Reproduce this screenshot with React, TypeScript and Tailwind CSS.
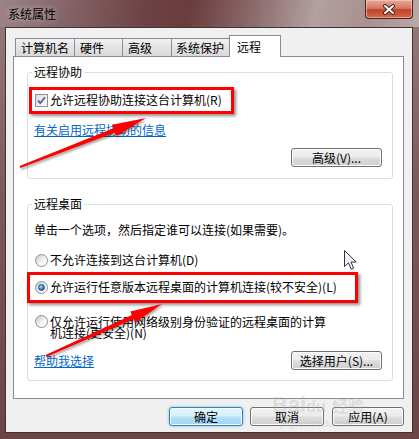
import clsx from "clsx";

type Pt = [number, number];

// red annotation arrow: thin tail, fat shaft, long head
function arrowPoints(tail: Pt, tip: Pt, headLen: number, headW: number, w0: number, w1: number) {
  const dx = tip[0] - tail[0];
  const dy = tip[1] - tail[1];
  const len = Math.hypot(dx, dy);
  const ux = dx / len;
  const uy = dy / len;
  const nx = -uy;
  const ny = ux;
  const bx = tip[0] - ux * headLen;
  const by = tip[1] - uy * headLen;
  const p = (x: number, y: number) => `${x.toFixed(1)},${y.toFixed(1)}`;
  return [
    p(tail[0] + nx * w0, tail[1] + ny * w0),
    p(bx + nx * w1, by + ny * w1),
    p(bx + nx * headW, by + ny * headW),
    p(tip[0], tip[1]),
    p(bx - nx * headW, by - ny * headW),
    p(bx - nx * w1, by - ny * w1),
    p(tail[0] - nx * w0, tail[1] - ny * w0),
  ].join(" ");
}

function Btn({ label, className, primary = false }: { label: string; className?: string; primary?: boolean }) {
  return (
    <button
      type="button"
      className={clsx(
        "flex h-[19px] items-center justify-center rounded-[3px] border text-[12px] leading-[14px] text-black",
        primary
          ? "border-[#3c7fb1] bg-[linear-gradient(180deg,#e5f4fc_0%,#d4eefb_48%,#b6e2f8_52%,#9fd5f3_100%)] shadow-[inset_0_0_0_1px_#f4fbff,0_0_3px_#5fc3f0]"
          : "border-[#707070] bg-[linear-gradient(180deg,#f2f2f2_0%,#ebebeb_48%,#dddddd_52%,#cfcfcf_100%)] shadow-[inset_0_0_0_1px_#fcfcfc]",
        className,
      )}
    >
      {label}
    </button>
  );
}

function Checkbox() {
  return (
    <div className="flex h-[13px] w-[13px] shrink-0 items-center justify-center border border-[#8e8f8f] bg-[linear-gradient(135deg,#dcdcdc,#ffffff)]">
      <svg width="11" height="11" viewBox="0 0 11 11">
        <path d="M2 5.5 L4.3 8.2 L9 2.2" fill="none" stroke="#4a5f97" strokeWidth="1.8" />
      </svg>
    </div>
  );
}

function Radio({ checked = false }: { checked?: boolean }) {
  return (
    <div className="flex h-[13px] w-[13px] shrink-0 items-center justify-center rounded-full border border-[#8e8f8f] bg-[linear-gradient(135deg,#c9c9c9,#f6f6f6_60%,#ffffff)]">
      {checked && (
        <div className="h-[7px] w-[7px] rounded-full border border-[#1b4f8a] bg-[radial-gradient(circle_at_35%_35%,#b8e3fb,#2f83c9_55%,#0d3f7d)]" />
      )}
    </div>
  );
}

function Group({ title, className, children }: { title: string; className?: string; children: React.ReactNode }) {
  return (
    <div className={clsx("relative ml-[13px] flex w-[366px] flex-col rounded-[3px] border border-[#d5dfe5]", className)}>
      <span className="absolute -top-[8px] left-[4px] bg-white px-[2px] text-[12px] leading-[14px]">{title}</span>
      {children}
    </div>
  );
}

const tabs = [
  { label: "计算机名", w: "w-[60px] pl-[5px]" },
  { label: "硬件", w: "w-[49px] pl-[5px]" },
  { label: "高级", w: "w-[50px] pl-[5px]" },
  { label: "系统保护", w: "w-[59px] pl-[4px]" },
];

export default function App() {
  return (
    <div className="relative flex h-[439px] w-[419px] flex-col overflow-hidden bg-[linear-gradient(180deg,#967c7f_0%,#7b5859_45%,#6b4547_100%)] font-['Noto_Sans_CJK_SC','Noto_Sans',sans-serif] text-black">
      {/* Title bar */}
      <div className="flex h-[27px] shrink-0 items-start bg-[linear-gradient(100deg,#9b8489_0%,#85666a_15%,#6d4244_35%,#6a3c3d_45%,#8a6a6b_60%,#b3a0a1_75%,#a8908f_88%,#b9a9a9_100%)]">
        <span className="ml-[8px] mt-[7px] text-[12px] leading-[14px] [text-shadow:0_0_6px_rgba(255,255,255,0.55)]">系统属性</span>
        <div className="ml-auto mr-[6px] flex h-[19px] w-[48px] items-center justify-center rounded-b-[4px] border border-t-0 border-[#4a2020] bg-[linear-gradient(180deg,#e7a797_0%,#d67a64_45%,#c2412a_55%,#d56a4c_100%)] shadow-[inset_0_0_0_1px_rgba(255,220,210,0.5)]">
          <svg width="14" height="11" viewBox="0 0 14 11">
            <path d="M3 2 L11 9 M11 2 L3 9" stroke="#4b2222" strokeWidth="4" strokeLinecap="round" />
            <path d="M3 2 L11 9 M11 2 L3 9" stroke="#ffffff" strokeWidth="2" strokeLinecap="round" />
          </svg>
        </div>
      </div>

      {/* Client area */}
      <div className="mb-[6px] ml-[5px] mr-[6px] flex flex-1 flex-col border border-[#3f3232] bg-[#f0f0f0] pl-[7px] pr-[8px] pt-[7px]">
        {/* Tabs */}
        <div className="flex h-[21px] items-end pl-[2px] text-[12px] leading-[14px]">
          {tabs.map((t, i) => (
            <div
              key={t.label}
              className={clsx(
                "flex h-[18px] items-center border border-b-0 border-[#898c95] bg-[linear-gradient(180deg,#f2f2f2,#e3e3e3_50%,#d9d9d9)]",
                i > 0 && "-ml-px",
                t.w,
              )}
            >
              {t.label}
            </div>
          ))}
          <div className="relative z-10 -mb-px -ml-px flex h-[22px] w-[52px] items-center border border-b-0 border-[#898c95] bg-white pl-[7px]">
            远程
          </div>
        </div>

        {/* Tab page */}
        <div className="flex h-[343px] w-[391px] flex-col border border-[#898c95] bg-white text-[12px] leading-[14px]">
          <Group title="远程协助" className="mt-[15px] h-[107px]">
            <div className="ml-[7px] mt-[20px] flex h-[14px] items-center gap-[2px]">
              <Checkbox />
              <span>允许远程协助连接这台计算机(R)</span>
            </div>
            <span className="ml-[6px] mt-[16px] self-start text-[#0066cc] underline">有关启用远程协助的信息</span>
            <Btn label="高级(V)..." className="mr-[10px] mt-[11px] w-[91px] self-end" />
          </Group>

          <Group title="远程桌面" className="mt-[25px] h-[177px]">
            <span className="ml-[6px] mt-[18px]">单击一个选项，然后指定谁可以连接(如果需要)。</span>
            <div className="ml-[7px] mt-[16px] flex h-[14px] items-center gap-[2px]">
              <Radio />
              <span>不允许连接到这台计算机(D)</span>
            </div>
            <div className="ml-[7px] mt-[13px] flex h-[14px] items-center gap-[2px]">
              <Radio checked />
              <span>允许运行任意版本远程桌面的计算机连接(较不安全)(L)</span>
            </div>
            <div className="ml-[7px] mt-[22px] flex items-start gap-[2px]">
              <div className="mt-[-1px]">
                <Radio />
              </div>
              <span className="w-[280px] leading-[11px]">
                仅允许运行使用网络级别身份验证的远程桌面的计算机连接(更安全)(N)
              </span>
            </div>
            <div className="mt-[13px] flex items-center justify-between">
              <span className="ml-[6px] text-[#0066cc] underline">帮助我选择</span>
              <Btn label="选择用户(S)..." className="mr-[10px] w-[91px]" />
            </div>
          </Group>
        </div>

        {/* Dialog buttons */}
        <div className="mt-[8px] flex justify-end">
          <Btn label="确定" primary className="w-[74px]" />
          <Btn label="取消" className="ml-[7px] w-[74px]" />
          <Btn label="应用(A)" className="ml-[8px] w-[72px]" />
        </div>
      </div>

      {/* Baidu watermark */}
      <div className="pointer-events-none absolute left-[272px] top-[393px] flex flex-col items-start text-[rgba(170,170,170,0.3)]">
        <span className="font-['Liberation_Sans',sans-serif] text-[22px] font-bold leading-[24px]">
          Bai<span className="text-[16px]">du</span> <span className="font-['Noto_Sans_CJK_SC',sans-serif] text-[16px]">经验</span>
        </span>
        <span className="ml-[8px] font-['Liberation_Sans',sans-serif] text-[9px] leading-[10px]">jingyan.baidu.com</span>
      </div>

      {/* Red highlight boxes */}
      <div className="pointer-events-none absolute left-[29px] top-[87px] h-[27px] w-[205px] border-[3px] border-[#ff0000] shadow-[2px_2px_3px_rgba(0,0,0,0.45)]" />
      <div className="pointer-events-none absolute left-[27px] top-[272px] h-[31px] w-[331px] border-[3px] border-[#ff0000] shadow-[2px_2px_3px_rgba(0,0,0,0.45)]" />

      {/* Arrows and cursor */}
      <svg className="pointer-events-none absolute inset-0 drop-shadow-[1px_2px_1px_rgba(0,0,0,0.35)]" width="419" height="439">
        <polygon points={arrowPoints([20, 167], [146, 118], 34, 6, 1, 2.2)} fill="#ff0000" />
        <polygon points={arrowPoints([46, 356], [162, 304], 32, 6, 1, 2.2)} fill="#ff0000" />
      </svg>
      <svg className="pointer-events-none absolute left-[344px] top-[250px]" width="14" height="21" viewBox="0 0 14 21">
        <path d="M0.5 0.5 L0.5 16.5 L4.5 12.8 L7.2 19.2 L9.6 18.2 L7 12 L12.2 12 Z" fill="#f4f6fa" stroke="#2a2f3a" strokeWidth="1" />
      </svg>
    </div>
  );
}
